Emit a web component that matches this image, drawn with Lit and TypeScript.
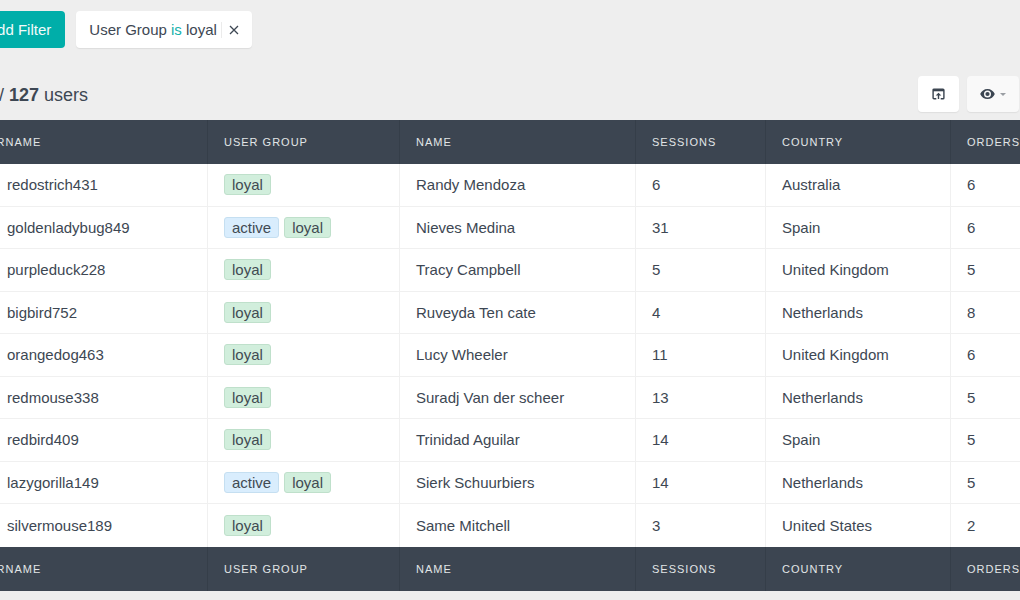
import { LitElement, html, css } from "lit";
import { customElement, property } from "lit/decorators.js";

interface User {
  username: string;
  groups: string[];
  name: string;
  sessions: number;
  country: string;
  orders: number;
}

const COLUMNS = ["Username", "User Group", "Name", "Sessions", "Country", "Orders"];

const USERS: User[] = [
  { username: "redostrich431", groups: ["loyal"], name: "Randy Mendoza", sessions: 6, country: "Australia", orders: 6 },
  { username: "goldenladybug849", groups: ["active", "loyal"], name: "Nieves Medina", sessions: 31, country: "Spain", orders: 6 },
  { username: "purpleduck228", groups: ["loyal"], name: "Tracy Campbell", sessions: 5, country: "United Kingdom", orders: 5 },
  { username: "bigbird752", groups: ["loyal"], name: "Ruveyda Ten cate", sessions: 4, country: "Netherlands", orders: 8 },
  { username: "orangedog463", groups: ["loyal"], name: "Lucy Wheeler", sessions: 11, country: "United Kingdom", orders: 6 },
  { username: "redmouse338", groups: ["loyal"], name: "Suradj Van der scheer", sessions: 13, country: "Netherlands", orders: 5 },
  { username: "redbird409", groups: ["loyal"], name: "Trinidad Aguilar", sessions: 14, country: "Spain", orders: 5 },
  { username: "lazygorilla149", groups: ["active", "loyal"], name: "Sierk Schuurbiers", sessions: 14, country: "Netherlands", orders: 5 },
  { username: "silvermouse189", groups: ["loyal"], name: "Same Mitchell", sessions: 3, country: "United States", orders: 2 },
];

@customElement("user-tag")
export class UserTag extends LitElement {
  @property() label = "";

  static styles = css`
    :host { display: inline-flex; }
    .tag {
      box-sizing: border-box;
      height: 21px;
      padding: 0 7px;
      border: 1px solid #bfe0cb;
      border-radius: 3px;
      background: #d1eedc;
      color: #414b53;
      font-size: 15px;
      line-height: 19px;
    }
    .active { background: #d9edfd; border-color: #c5dff1; }
  `;

  render() {
    return html`<span class="tag ${this.label}">${this.label}</span>`;
  }
}

@customElement("user-table")
export class UserTable extends LitElement {
  static styles = css`
    :host { display: block; }
    table {
      width: 100%;
      table-layout: fixed;
      border-collapse: separate;
      border-spacing: 0;
      background: #fff;
    }
    .c0 { width: 265px; }
    .c1 { width: 192px; }
    .c2 { width: 236px; }
    .c3 { width: 130px; }
    .c4 { width: 185px; }
    th, td {
      box-sizing: border-box;
      padding: 0 16px;
      text-align: left;
      vertical-align: middle;
      white-space: nowrap;
    }
    th {
      height: 44px;
      background: #3c4551;
      border-right: 1px solid #353e49;
      color: #e2e5e7;
      font-size: 11px;
      font-weight: 400;
      line-height: 16px;
      letter-spacing: 1px;
      text-transform: uppercase;
    }
    th:first-child { padding-left: 28px; }
    th:last-child { padding-right: 0; }
    td {
      height: 42px;
      border-right: 1px solid #f0f0f0;
      border-bottom: 1px solid #f0f0f0;
      font-size: 15px;
      line-height: 20px;
    }
    tr:nth-child(odd) td { height: 43px; }
    td:first-child { padding-left: 64px; }
    th:last-child, td:last-child { border-right: 0; }
    tbody tr:last-child td { border-bottom: 0; }
    .tags { display: flex; gap: 5px; padding-bottom: 1px; }
  `;

  private labels() {
    return html`<tr>${COLUMNS.map((c) => html`<th scope="col">${c}</th>`)}</tr>`;
  }

  render() {
    return html`
      <table>
        <colgroup>${COLUMNS.map((_, i) => html`<col class="c${i}" />`)}</colgroup>
        <thead>${this.labels()}</thead>
        <tbody>
          ${USERS.map((u) => html`
            <tr>
              <td>${u.username}</td>
              <td><div class="tags">${u.groups.map((g) => html`<user-tag label=${g}></user-tag>`)}</div></td>
              <td>${u.name}</td>
              <td>${u.sessions}</td>
              <td>${u.country}</td>
              <td>${u.orders}</td>
            </tr>`)}
        </tbody>
        <tfoot>${this.labels()}</tfoot>
      </table>
    `;
  }
}

@customElement("app-root")
export class AppRoot extends LitElement {
  static styles = css`
    :host {
      display: block;
      box-sizing: border-box;
      min-height: 100vh;
      overflow: hidden;
      background: #eee;
      color: #3d4753;
      font-family: "Liberation Sans", Arial, sans-serif;
      font-size: 15px;
    }
    /* The page is scrolled sideways, so its left edge lies outside the window. */
    .page { margin-left: -57px; padding-top: 11px; }
    button { border: 0; font: inherit; color: inherit; cursor: pointer; }
    .filters {
      display: flex;
      gap: 11px;
      padding-left: 16px;
      line-height: 20px;
    }
    .add {
      height: 37px;
      padding: 0 14px 0 16px;
      border-radius: 4px;
      background: #00aea9;
      color: #f2fbfb;
      white-space: nowrap;
    }
    .chip {
      display: flex;
      align-items: center;
      height: 37px;
      padding-left: 13px;
      border-radius: 4px;
      background: #fff;
      box-shadow: 0 1px 1px #dcdcdc;
    }
    .is { color: #16b1ab; }
    .remove {
      display: flex;
      align-items: center;
      height: 16px;
      margin-left: 4px;
      padding: 0 13px 0 7px;
      border-left: 1px solid #ebebeb;
      background: none;
    }
    .summary {
      display: flex;
      align-items: center;
      justify-content: space-between;
      margin: 28px 0 8px;
      padding: 0 1px 0 21px;
    }
    h1 {
      margin: 0;
      padding-top: 1px;
      font-size: 18px;
      font-weight: 400;
      line-height: 24px;
    }
    .actions { display: flex; gap: 8px; }
    .action {
      display: flex;
      align-items: center;
      justify-content: center;
      gap: 5px;
      height: 36px;
      padding: 0 14px;
      border-radius: 4px;
      background: #fff;
      box-shadow: 0 1px 1px #dedede;
    }
    .view { background: #f9f9f9; padding: 0 13px; }
    svg { display: block; }
  `;

  render() {
    return html`
      <main class="page">
        <div class="filters">
          <button class="add">+ Add Filter</button>
          <div class="chip">
            <span>User Group <span class="is">is</span> loyal</span>
            <button class="remove" aria-label="Remove filter">
              <svg width="10" height="10" viewBox="0 0 10 10" fill="none" stroke="#3d4753" stroke-width="1.3">
                <path d="M1 1l8 8M9 1L1 9" />
              </svg>
            </button>
          </div>
        </div>
        <div class="summary">
          <h1>127 / <strong>127</strong> users</h1>
          <div class="actions">
            <button class="action" aria-label="Export">
              <svg width="13" height="12" viewBox="0 0 13 12" fill="none" stroke="#39434f" stroke-width="1.4">
                <path d="M4.3 10.8H2a.9.9 0 0 1-.9-.9V2a.9.9 0 0 1 .9-.9h9a.9.9 0 0 1 .9.9v7.900a.9.9 0 0 1-.9.9H8.700" />
                <path d="M1 2.200h11" stroke-width="2.200" />
                <path d="M6.500 11V6" />
                <path d="M3.700 7.600L6.500 4.700l2.800 2.900z" fill="#39434f" stroke="none" />
              </svg>
            </button>
            <button class="action view" aria-label="Visible columns">
              <svg width="15" height="10" viewBox="0 0 15 10">
                <path fill="#3b4551" fill-rule="evenodd" d="M7.500 0C4.200 0 1.400 2 .2 5c1.200 3 4 5 7.300 5s6.100-2 7.300-5C13.600 2 10.800 0 7.500 0zm0 8.500a3.500 3.500 0 1 1 0-7 3.500 3.500 0 0 1 0 7zm0-1.400a2.100 2.100 0 1 0 0-4.200 2.100 2.100 0 0 0 0 4.200z" />
              </svg>
              <svg width="6" height="3" viewBox="0 0 6 3"><path fill="#9a9ea3" d="M0 0h6L3 3z" /></svg>
            </button>
          </div>
        </div>
        <user-table></user-table>
      </main>
    `;
  }
}
